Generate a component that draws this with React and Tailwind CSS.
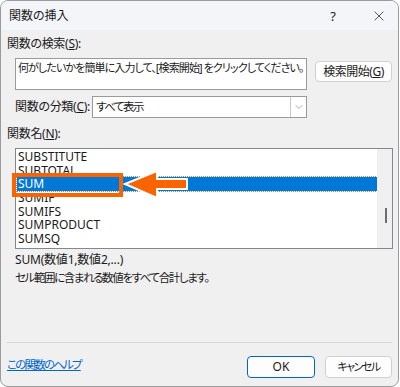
import React from 'react';
import { X, ChevronDown } from 'lucide-react';

const functions = ['SUBSTITUTE', 'SUBTOTAL', 'SUM', 'SUMIF', 'SUMIFS', 'SUMPRODUCT', 'SUMSQ'];

const App = () => {
  return (
    <div className="w-[400px] h-[387px] bg-white">
      <div
        className="w-[399px] h-[387px] border border-[#9b9b9b] rounded-[8px] overflow-hidden bg-[#f0f0f0] flex flex-col text-[12px] text-[#1a1a1a] [font-feature-settings:'palt']"
        style={{ fontFamily: '"Noto Sans", "Noto Sans CJK JP", sans-serif' }}
      >
        {/* title bar */}
        <div className="h-[29px] bg-[#f3f5f9] flex items-center pl-[8px] shrink-0">
          <span className="leading-[16px]">関数の挿入</span>
          <span className="ml-auto w-[20px] text-center text-[13px] leading-[16px] mr-[26px]">?</span>
          <span className="w-[20px] flex justify-center mr-[9px]">
            <X size={16} strokeWidth={1.1} />
          </span>
        </div>

        <div className="flex flex-col px-[6px]">
          <div className="mt-[6px] leading-[16px] tracking-[-0.3px]">関数の検索(<u>S</u>):</div>

          <div className="flex items-start mt-[6px] ml-[8px]">
            <div className="w-[292px] h-[32px] bg-white border border-[#9a9a9a] px-[2px] pt-[1px] leading-[16px] whitespace-nowrap overflow-hidden text-[11px] tracking-[-0.9px]">
              何がしたいかを簡単に入力して、[検索開始] をクリックしてください。
            </div>
            <button className="ml-auto mt-[3px] w-[77px] h-[21px] bg-[#fdfdfd] border border-[#d0d0d0] rounded-[4px] leading-[16px] whitespace-nowrap tracking-[-0.5px]">
              検索開始(<u>G</u>)
            </button>
          </div>

          <div className="flex items-center mt-[6px] ml-[8px] h-[22px]">
            <span className="leading-[16px] w-[77px] whitespace-nowrap tracking-[-0.3px]">関数の分類(<u>C</u>):</span>
            <div className="w-[215px] h-[22px] bg-white border border-[#9a9a9a] flex items-center">
              <span className="pl-[3px] leading-[16px] flex-1 text-[11.5px] tracking-[-1.5px]">すべて表示</span>
              <span className="w-[16px] h-full border-l border-[#c8c8c8] flex items-center justify-center text-[#555]">
                <ChevronDown size={12} strokeWidth={1} />
              </span>
            </div>
          </div>

          <div className="mt-[8px] leading-[16px] tracking-[-0.3px]">関数名(<u>N</u>):</div>

          <div className="relative mt-[6px] ml-[8px] w-[378px] h-[101px]">
            <div className="w-full h-full bg-white border border-[#828790] flex">
              <div className="flex-1 flex flex-col pt-[1px]">
                {functions.map((name) => (
                  <div
                    key={name}
                    className={
                      name === 'SUM'
                        ? 'h-[13.7px] ml-[1px] pl-[1px] bg-[#0078d7] text-white outline-1 outline-dotted outline-[#b08a5a] leading-[13.7px]'
                        : 'h-[13.7px] ml-[1px] pl-[1px] leading-[13.7px]'
                    }
                  >
                    {name}
                  </div>
                ))}
              </div>
              <div className="w-[15px] h-full bg-[#f0f0f0] flex justify-center">
                <div className="w-[2px] h-[15px] mt-[59px] ml-[2px] bg-[#6d6d6d]" />
              </div>
            </div>

            {/* annotation */}
            <div className="absolute left-[-3px] top-[25px] w-[111px] h-[24px] border-[4px] border-[#fa6400]" />
            <svg className="absolute left-[105px] top-[19px]" width="72" height="36" viewBox="0 0 72 36">
              <polygon
                points="5,17 37,4 37,12 67,12 67,22 37,22 37,31"
                fill="#fa6400"
                stroke="#ffffff"
                strokeWidth="2"
                strokeLinejoin="miter"
              />
            </svg>
          </div>

          <div className="mt-[3px] ml-[8px] leading-[16px] tracking-[-0.2px]">SUM(数値1,数値2,...)</div>
          <div className="mt-[2px] ml-[8px] leading-[16px] text-[11.5px] tracking-[-1.4px]">セル範囲に含まれる数値をすべて合計します。</div>

          <div className="mt-[56px] h-px bg-[#d9d9d9]" />

          <div className="flex items-center mt-[13px]">
            <a href="#" className="text-[#0066cc] underline leading-[16px] pb-[5px] text-[11.5px] tracking-[-1.8px]">この関数のヘルプ</a>
            <button className="ml-auto w-[68px] h-[22px] bg-[#fdfdfd] border border-[#0067c0] rounded-[4px] leading-[16px]">
              OK
            </button>
            <button className="ml-[10px] w-[67px] h-[22px] bg-[#fdfdfd] border border-[#d0d0d0] rounded-[4px] leading-[16px] text-[11px] tracking-[-1.5px]">
              キャンセル
            </button>
          </div>
        </div>
      </div>
    </div>
  );
};

export default App;
